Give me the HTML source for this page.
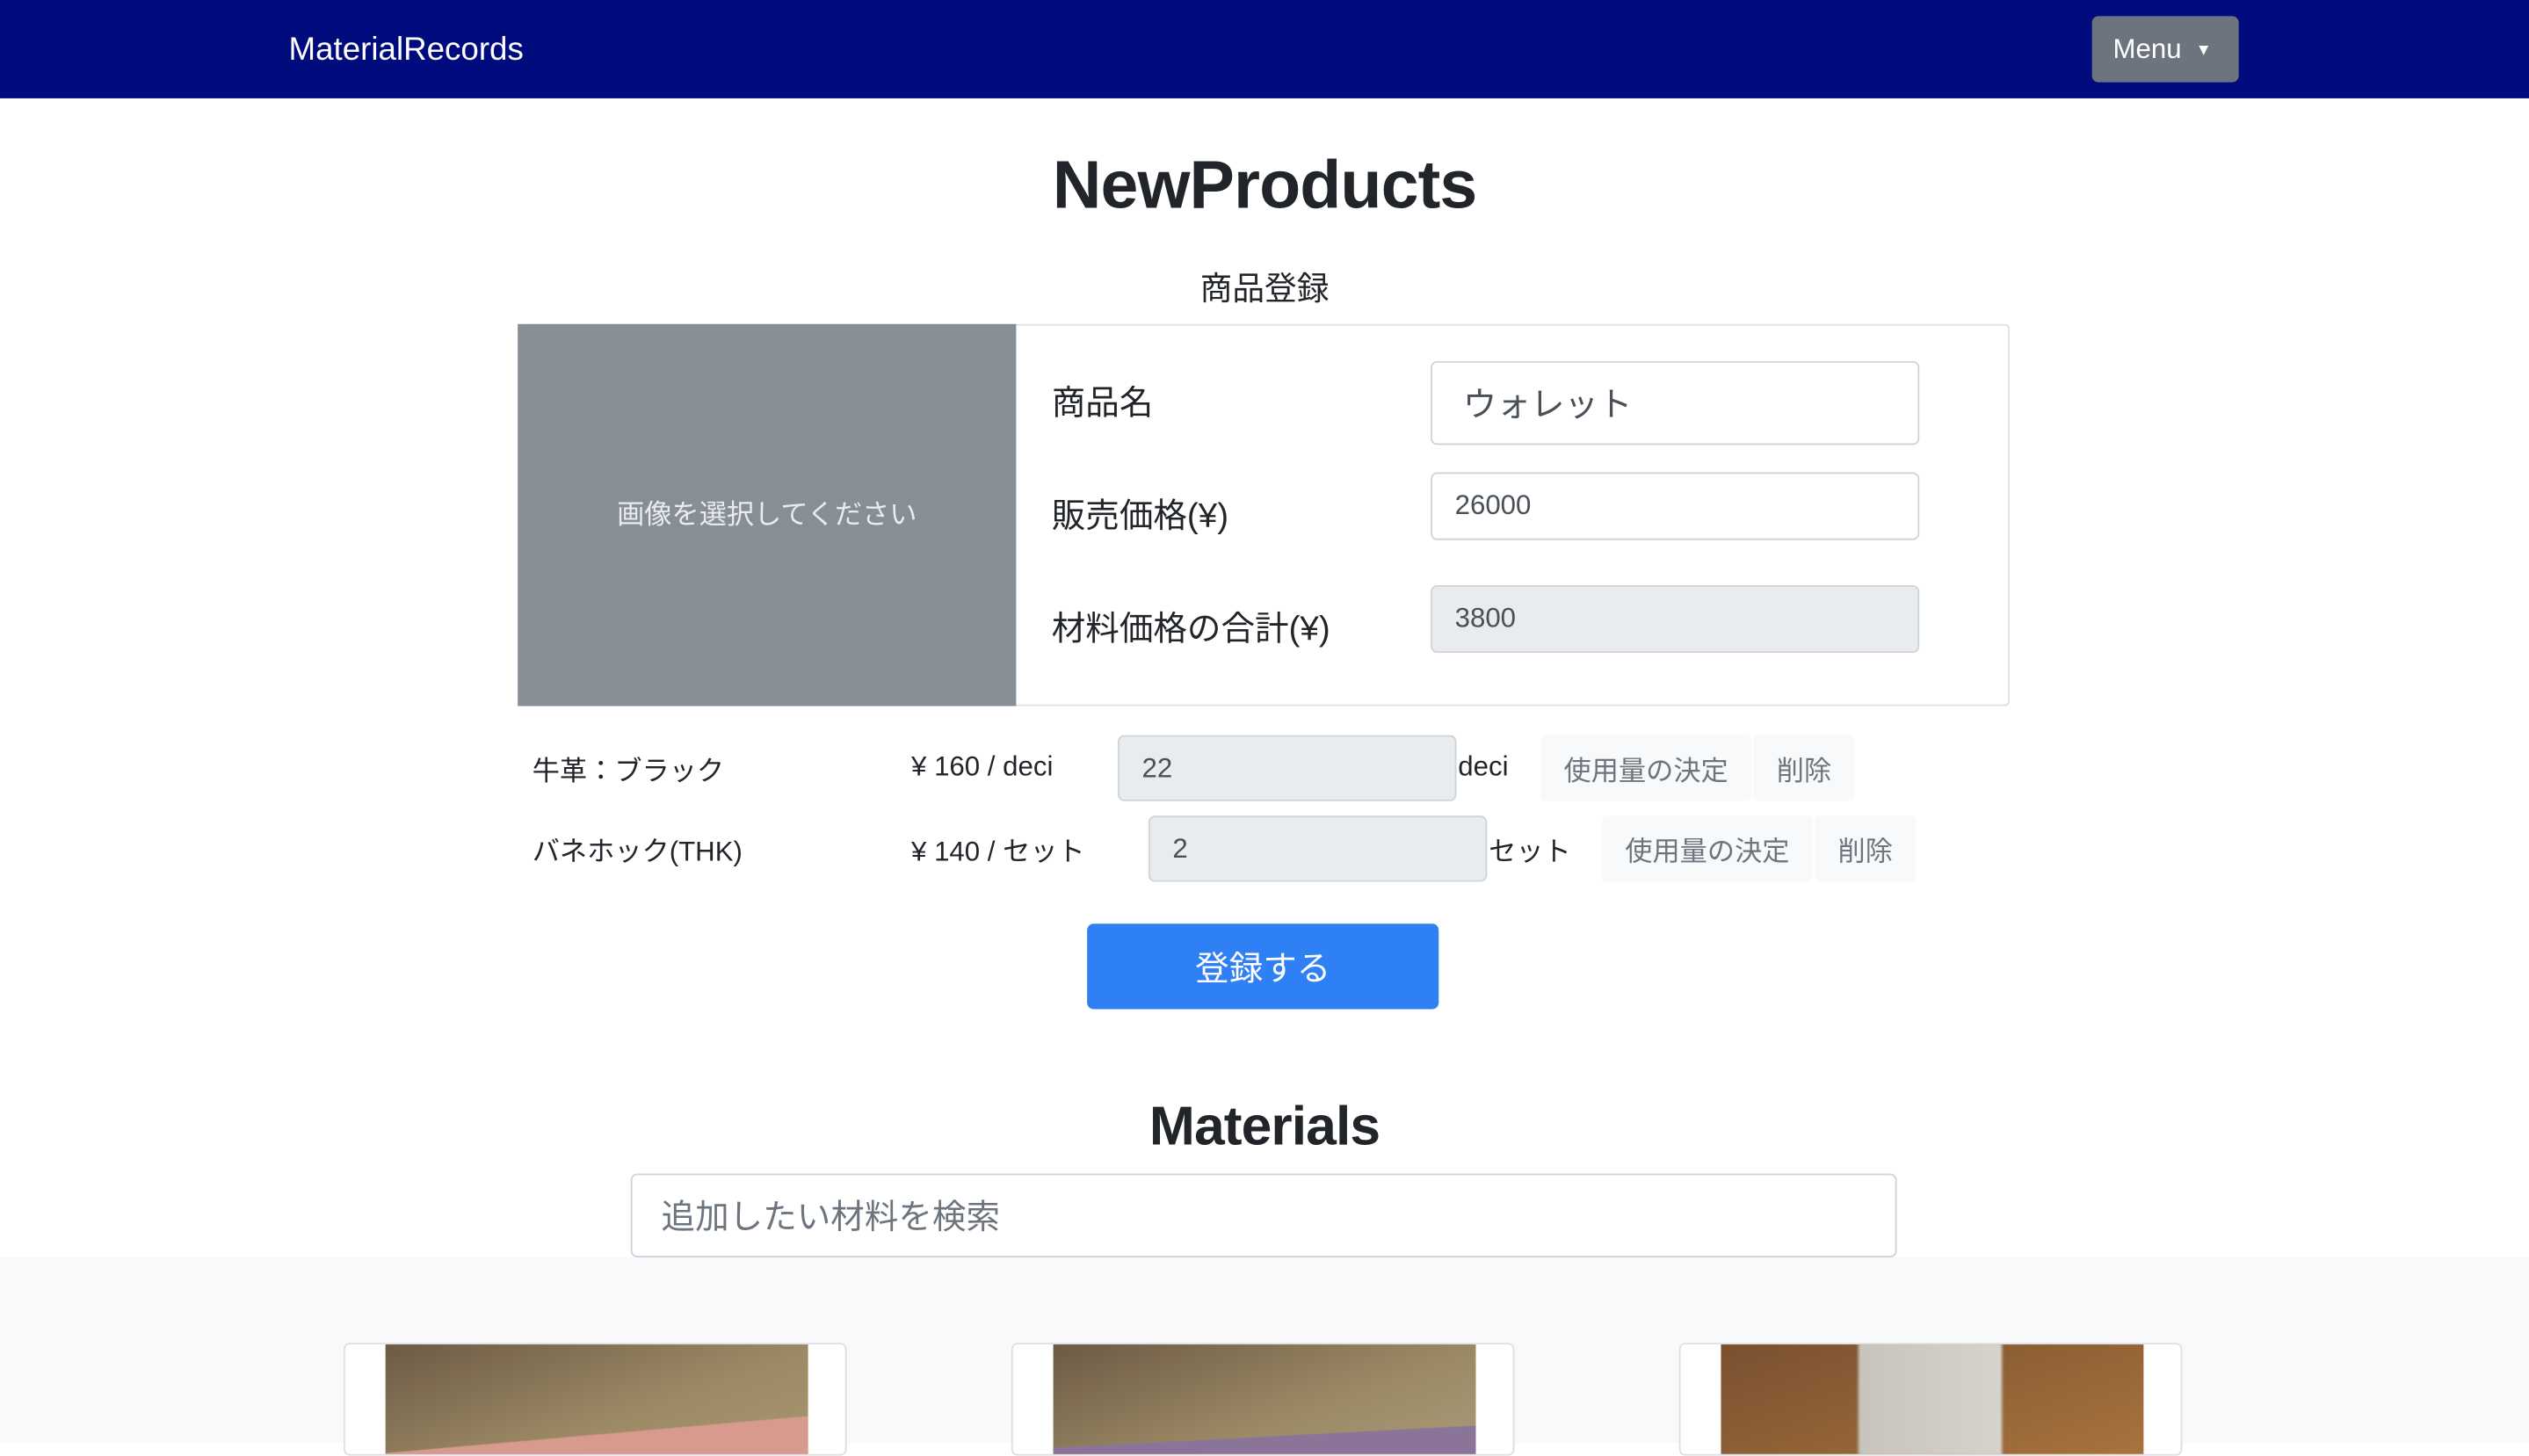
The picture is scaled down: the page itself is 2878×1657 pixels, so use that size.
<!DOCTYPE html>
<html><head><meta charset="utf-8"><style>
html,body{margin:0;padding:0;width:2878px;height:1642px;overflow:hidden;background:#fff}
#w{position:absolute;left:0;top:0;width:1568px;height:895px;transform:scale(1.8355,1.8346);transform-origin:0 0;font-family:"Liberation Sans","Noto Sans CJK JP",sans-serif;color:#212529}
.a{position:absolute;white-space:nowrap}
.inp{position:absolute;border:1px solid #ced4da;border-radius:4px;background:#fff;box-sizing:border-box;color:#495057;display:flex;align-items:center}
.gray{background:#e9ecef}
.btn{position:absolute;background:#f8f9fa;color:#6c757d;font-size:17px;display:flex;align-items:center;justify-content:center;border-radius:4px}
.card{position:absolute;top:833px;width:312px;height:70px;background:#fff;border:1px solid #dfdfdf;border-radius:4px;box-sizing:border-box;overflow:hidden}
.img{position:absolute;left:25px;top:0;width:262px;height:70px}
</style></head><body><div id="w">
<div class="a" style="left:0;top:0;width:1568px;height:61px;background:#000b7e"></div>
<div class="a" style="left:179px;top:20px;font-size:20px;color:#fff">MaterialRecords</div>
<div class="a" style="left:1297px;top:10px;width:91px;height:41px;background:#6c757d;border-radius:4px;color:#fff;font-size:17px;line-height:41px;box-sizing:border-box;padding-left:13px">Menu <span style="font-size:10px;vertical-align:2px;margin-left:4px">▼</span></div>
<div class="a" style="left:0;width:1568px;top:91px;text-align:center;font-size:42px;font-weight:bold;letter-spacing:-0.5px">NewProducts</div>
<div class="a" style="left:0;width:1568px;top:163px;text-align:center;font-size:20px">商品登録</div>
<div class="a" style="left:321px;top:201px;width:925px;height:237px;border:1px solid #dfdfdf;border-radius:3px;box-sizing:border-box"></div>
<div class="a" style="left:321px;top:201px;width:309px;height:237px;background:#888e96;color:#e9ecef;font-size:17px;display:flex;align-items:center;justify-content:center;padding-right:0;padding-bottom:4px;box-sizing:border-box">画像を選択してください</div>
<div class="a" style="left:652px;top:234px;font-size:21px">商品名</div>
<div class="a" style="left:652px;top:304px;font-size:21px">販売価格(¥)</div>
<div class="a" style="left:652px;top:374px;font-size:21px">材料価格の合計(¥)</div>
<div class="inp" style="left:887px;top:224px;width:303px;height:52px;font-size:21px;padding-left:19px">ウォレット</div>
<div class="inp" style="left:887px;top:293px;width:303px;height:42px;font-size:17px;padding-left:14px">26000</div>
<div class="inp gray" style="left:887px;top:363px;width:303px;height:42px;font-size:17px;padding-left:14px">3800</div>
<div class="a" style="left:330px;top:464px;font-size:17px">牛革：ブラック</div>
<div class="a" style="left:565px;top:466px;font-size:17px">¥ 160 / deci</div>
<div class="inp gray" style="left:693px;top:456px;width:210px;height:41px;font-size:17px;padding-left:14px">22</div>
<div class="a" style="left:904px;top:466px;font-size:17px">deci</div>
<div class="btn" style="left:955px;top:456px;width:131px;height:41px">使用量の決定</div>
<div class="btn" style="left:1087px;top:456px;width:63px;height:41px">削除</div>
<div class="a" style="left:330px;top:514px;font-size:17px">バネホック(THK)</div>
<div class="a" style="left:565px;top:514px;font-size:17px">¥ 140 / セット</div>
<div class="inp gray" style="left:712px;top:506px;width:210px;height:41px;font-size:17px;padding-left:14px">2</div>
<div class="a" style="left:923px;top:514px;font-size:17px">セット</div>
<div class="btn" style="left:993px;top:506px;width:131px;height:41px">使用量の決定</div>
<div class="btn" style="left:1125px;top:506px;width:63px;height:41px">削除</div>
<div class="a" style="left:674px;top:573px;width:218px;height:53px;background:#2f80f5;border-radius:4px;color:#fff;font-size:21px;display:flex;align-items:center;justify-content:center">登録する</div>
<div class="a" style="left:0;width:1568px;top:680px;text-align:center;font-size:34px;font-weight:bold;letter-spacing:-0.5px">Materials</div>
<div class="a" style="left:0;top:780px;width:1568px;height:115px;background:#f8f9fa"></div>
<div class="inp" style="left:391px;top:728px;width:785px;height:52px;font-size:21px;padding-left:18px;color:#6c757d">追加したい材料を検索</div>
<div class="card" style="left:213px"><div class="img" style="background:linear-gradient(175deg,transparent 72%,#d99a8e 73%),linear-gradient(160deg,#6d5a45,#9c8a66 60%,#a89670)"></div></div>
<div class="card" style="left:627px"><div class="img" style="background:linear-gradient(177deg,transparent 76%,#8a7599 77%),linear-gradient(160deg,#6d5a45,#9c8a66 60%,#a99a78)"></div></div>
<div class="card" style="left:1041px"><div class="img" style="background:linear-gradient(90deg,transparent 32%,#c8c4bd 33%,#d6d2cc 66%,transparent 67%),linear-gradient(160deg,#7a5030,#a8743e)"></div></div>
</div></body></html>
